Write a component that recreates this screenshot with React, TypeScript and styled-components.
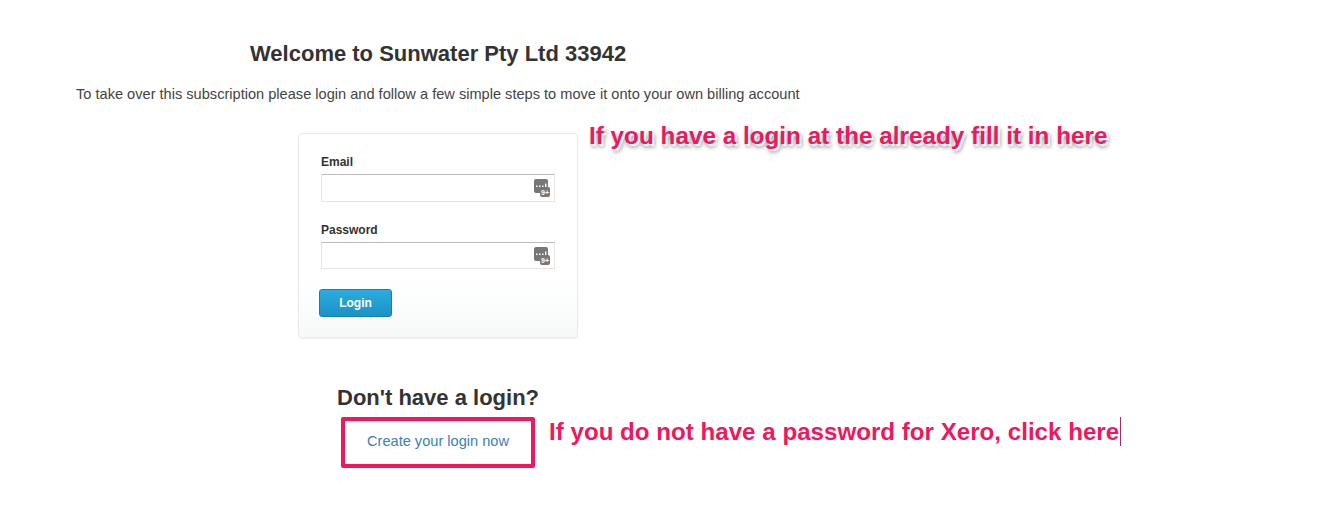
import React, { ReactElement } from "react";
import styled, { createGlobalStyle } from "styled-components";

const GlobalStyle = createGlobalStyle`
  html, body {
    margin: 0;
    padding: 0;
    background: #fff;
    font-family: "Liberation Sans", Arial, sans-serif;
    color: #333;
  }
`;

const Page = styled.div`
  width: 1336px;
  height: 521px;
  overflow: hidden;
  padding-top: 41px;
  box-sizing: border-box;
`;

const Title = styled.h1`
  margin: 0 0 0 250px;
  font-size: 22px;
  line-height: 26px;
  font-weight: bold;
  color: #333;
`;

const Intro = styled.p`
  margin: 17px 0 0 76px;
  font-size: 14.6px;
  line-height: 20px;
  color: #444;
`;

const LoginRow = styled.div`
  display: flex;
  align-items: flex-start;
  margin: 29px 0 0 298px;
`;

const Card = styled.form`
  width: 280px;
  height: 205px;
  box-sizing: border-box;
  padding: 21px 22px 0 22px;
  border: 1px solid #e8eaea;
  border-radius: 4px;
  box-shadow: 0 1px 2px rgba(0, 0, 0, 0.07);
  background: linear-gradient(to bottom, #fff 0, #fff 145px, #f7f9f9 100%);
`;

const Label = styled.label<{ $mb: number }>`
  display: block;
  font-size: 12px;
  line-height: 14px;
  font-weight: bold;
  color: #333;
  margin-bottom: ${(p) => p.$mb}px;
`;

const InputWrap = styled.div<{ $h: number; $mb: number }>`
  display: flex;
  align-items: center;
  justify-content: flex-end;
  width: 234px;
  height: ${(p) => p.$h}px;
  box-sizing: border-box;
  padding-right: 4px;
  margin-bottom: ${(p) => p.$mb}px;
  border: 1px solid #e6e6e6;
  border-top: 1px solid #bcbcbc;
  background: #fff;
`;

const LoginButton = styled.button`
  display: block;
  width: 73px;
  height: 28px;
  margin-left: -2px;
  padding: 0;
  border: 1px solid #1a7ea8;
  border-radius: 3px;
  background: linear-gradient(to bottom, #2cabe0, #1a93c6);
  color: #fff;
  font-family: inherit;
  font-size: 12px;
  font-weight: bold;
`;

const Note = styled.div<{ $glow?: boolean }>`
  color: #f0185c;
  font-size: 24.3px;
  line-height: 28px;
  font-weight: bold;
  white-space: nowrap;
  text-shadow: ${(p) =>
    p.$glow ? "2px 2px 1px #fff, 2px 3px 4px rgba(0, 0, 0, 0.55)" : "none"};
`;

const TopNote = styled(Note)`
  margin: -11px 0 0 11px;
`;

const SubTitle = styled.h2`
  margin: 47px 0 0 337px;
  font-size: 22px;
  line-height: 26px;
  font-weight: bold;
  color: #333;
`;

const CreateRow = styled.div`
  display: flex;
  align-items: flex-start;
  margin: 6px 0 0 341px;
`;

const CreateBox = styled.div`
  display: flex;
  align-items: center;
  justify-content: center;
  width: 194px;
  height: 51px;
  box-sizing: border-box;
  border: 4px solid #f0185c;
  border-radius: 2px;
  padding-bottom: 4px;
`;

const CreateLink = styled.a`
  font-size: 14.6px;
  color: #3d80b5;
  text-decoration: none;
`;

const BottomNote = styled(Note)`
  margin: 0 0 0 14px;
  font-size: 24.15px;
  display: flex;
  align-items: center;
`;

const Caret = styled.span`
  display: inline-block;
  width: 1px;
  height: 29px;
  margin-left: 1px;
  background: #a02a6a;
`;

const KeyIcon = (): ReactElement => (
  <svg width="16" height="18" viewBox="0 0 16 18">
    <rect x="0" y="0" width="14" height="14" rx="2" fill="#777" />
    <rect x="6" y="8" width="10" height="10" rx="2" fill="#777" />
    <g fill="#fff">
      <rect x="2" y="6.5" width="1.5" height="1.5" />
      <rect x="5" y="6.5" width="1.5" height="1.5" />
      <rect x="8" y="6.5" width="1.5" height="1.5" />
      <rect x="11" y="4.5" width="1.4" height="3.5" />
    </g>
    <text
      x="11"
      y="16"
      textAnchor="middle"
      fontFamily="Liberation Sans, sans-serif"
      fontSize="7"
      fontWeight="bold"
      fill="#fff"
    >
      9+
    </text>
  </svg>
);

const App = (): ReactElement => {
  return (
    <>
      <GlobalStyle />
      <Page>
        <Title>Welcome to Sunwater Pty Ltd 33942</Title>
        <Intro>
          To take over this subscription please login and follow a few simple
          steps to move it onto your own billing account
        </Intro>
        <LoginRow>
          <Card>
            <Label $mb={5}>Email</Label>
            <InputWrap $h={28} $mb={21}>
              <KeyIcon />
            </InputWrap>
            <Label $mb={5}>Password</Label>
            <InputWrap $h={27} $mb={20}>
              <KeyIcon />
            </InputWrap>
            <LoginButton type="button">Login</LoginButton>
          </Card>
          <TopNote $glow>If you have a login at the already fill it in here</TopNote>
        </LoginRow>
        <SubTitle>Don't have a login?</SubTitle>
        <CreateRow>
          <CreateBox>
            <CreateLink href="#">Create your login now</CreateLink>
          </CreateBox>
          <BottomNote>
            If you do not have a password for Xero, click here
            <Caret />
          </BottomNote>
        </CreateRow>
      </Page>
    </>
  );
};

export default App;
